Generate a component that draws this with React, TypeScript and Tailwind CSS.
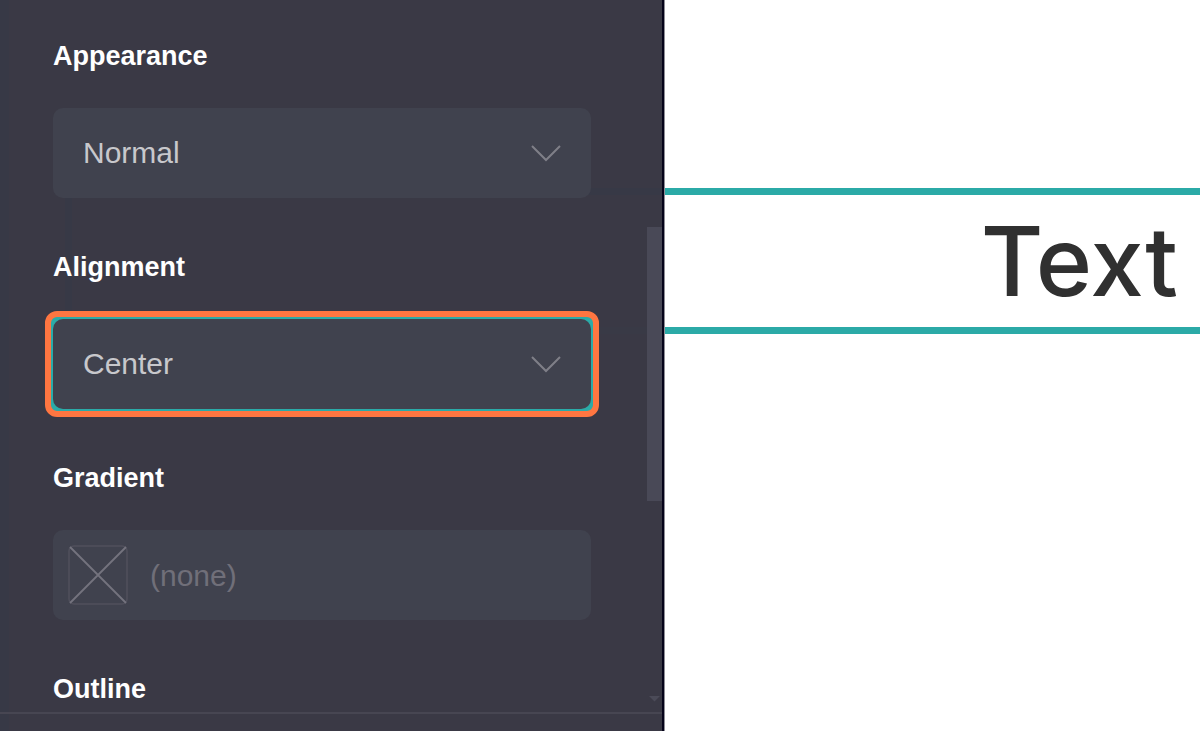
import { useState } from "react";

const SelectField = ({ id, label, options, active = false }) => {
  const [value, setValue] = useState(options[0]);

  return (
    <div className="flex flex-col gap-8">
      <label htmlFor={id} className="text-[27px] leading-10 font-bold text-white">
        {label}
      </label>
      <div
        className={
          active
            ? "-m-2 rounded-xl border-6 border-[#ff7641] bg-[#2baba8] p-0.5"
            : ""
        }
      >
        <div className="relative">
          <select
            id={id}
            value={value}
            onChange={(e) => setValue(e.target.value)}
            className="block h-[90px] w-full appearance-none rounded-[10px] bg-[#40424e] px-[30px] pb-0.5 text-[30px] text-[#c8c8cc] outline-none"
          >
            {options.map((option) => (
              <option key={option}>{option}</option>
            ))}
          </select>
          <svg
            className="pointer-events-none absolute top-[37px] right-[30px]"
            width="30"
            height="17"
            viewBox="0 0 30 17"
            fill="none"
            stroke="#7f7f88"
            strokeWidth="2"
          >
            <path d="M1 1 L15 15 L29 1" />
          </svg>
        </div>
      </div>
    </div>
  );
};

const GradientField = () => {
  return (
    <div className="flex flex-col gap-8">
      <label
        htmlFor="gradient"
        className="text-[27px] leading-10 font-bold text-white"
      >
        Gradient
      </label>
      <button
        id="gradient"
        className="flex h-[90px] w-full items-center gap-[22px] rounded-[10px] bg-[#40424e] px-[15px] text-[30px] text-[#706f79]"
      >
        <svg width="60" height="60" viewBox="0 0 60 60" fill="none">
          <rect x="1" y="1" width="58" height="58" rx="5" stroke="#50505c" strokeWidth="1.5" />
          <path d="M2 2 L58 58 M58 2 L2 58" stroke="#74737e" strokeWidth="1.8" />
        </svg>
        (none)
      </button>
    </div>
  );
};

const ScrollBar = () => {
  return (
    <div className="flex w-[15px] shrink-0 flex-col items-center justify-between pt-[227px] pb-2.5">
      <div className="h-[274px] w-full bg-[#494957]" />
      <svg width="11" height="6" viewBox="0 0 11 6" fill="#4b4b58">
        <path d="M0 0 H11 L5.5 5.5 Z" />
      </svg>
    </div>
  );
};

const SettingsPanel = () => {
  return (
    <aside className="relative flex h-full min-h-0 flex-col border-r border-[#8e8d96] bg-[#3a3945]">
      {/* selection frame showing faintly through the panel */}
      <div className="absolute top-[188px] right-0 left-[65px] h-[146px] border-7 border-r-0 border-[#373946] border-b-[#393a46]" />
      <div className="relative flex min-h-0 flex-1 flex-col border-r-2 border-l-9 border-r-[#05031a] border-l-[#373946]">
        <div className="flex min-h-0 flex-1 overflow-hidden">
          <div className="flex flex-1 flex-col gap-[49px] pt-9 pr-14 pl-11">
            <SelectField
              id="appearance"
              label="Appearance"
              options={["Normal", "Multiply", "Screen"]}
            />
            <SelectField
              id="alignment"
              label="Alignment"
              options={["Center", "Left", "Right"]}
              active
            />
            <GradientField />
            <p className="text-[27px] leading-10 font-bold text-white">Outline</p>
          </div>
          <ScrollBar />
        </div>
        <div className="-ml-[9px] h-[19px] shrink-0 border-t-2 border-[#474652]" />
      </div>
    </aside>
  );
};

const Canvas = () => {
  return (
    <main className="h-full overflow-hidden bg-white pt-[188px]">
      <div className="flex h-[146px] items-center justify-end border-y-7 border-[#2baaa7] pr-[22px]">
        <p className="font-['Inter',sans-serif] text-[96px] leading-none font-medium text-[#303030]">
          Text
        </p>
      </div>
    </main>
  );
};

const App = () => {
  return (
    <div className="grid h-screen grid-cols-[133fr_107fr] font-['Liberation_Sans',Arial,sans-serif]">
      <SettingsPanel />
      <Canvas />
    </div>
  );
};

export default App;
